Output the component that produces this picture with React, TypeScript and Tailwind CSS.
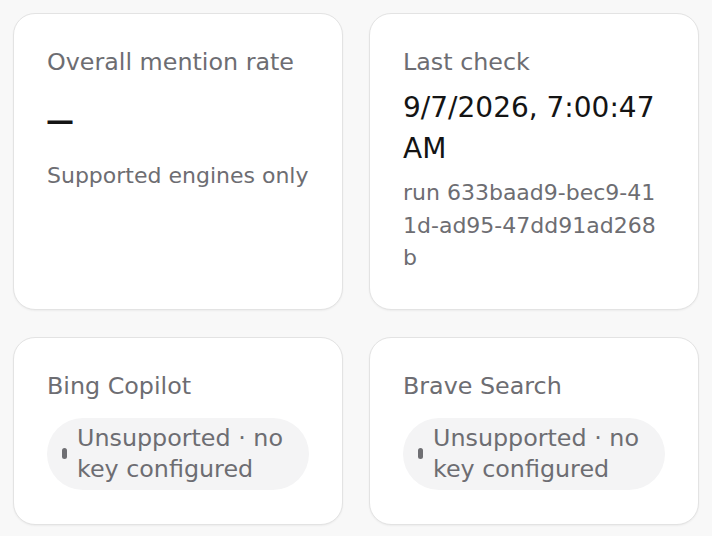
import type { ReactNode } from 'react'

const font = { fontFamily: '"DejaVu Sans", "Noto Sans", sans-serif' }

function Card({ label, children }: { label: string; children: ReactNode }) {
  return (
    <div className="flex flex-col rounded-[22px] border border-[#e3e3e3] bg-white px-[33px] pt-[32px] pb-[34px] shadow-[0_1px_2px_rgba(0,0,0,0.05)]">
      <div className="text-[23.8px] leading-[33px] text-[#6d6d72]">{label}</div>
      {children}
    </div>
  )
}

function StatusPill({ text }: { text: string }) {
  return (
    <div className="mt-[15px] flex items-center gap-[10px] rounded-full bg-[#f4f4f5] px-[15px] py-[5px]">
      <span className="h-[11px] w-[5px] shrink-0 rounded-full bg-[#6f6f73]" />
      <span className="text-[23.8px] leading-[31px] text-[#6d6d72]">{text}</span>
    </div>
  )
}

export default function App() {
  return (
    <div className="min-h-screen bg-[#f8f8f8] p-[13px]" style={font}>
      <div className="grid grid-cols-2 gap-x-[26px] gap-y-[27px]">
        <Card label="Overall mention rate">
          <div className="mt-[21px] -ml-px text-[28px] leading-[41px] font-semibold text-[#141414]">—</div>
          <div className="mt-[19px] text-[22px] leading-[32px] text-[#6d6d72]">Supported engines only</div>
        </Card>
        <Card label="Last check">
          <div className="mt-[8px] text-[28px] leading-[41px] text-[#141414]">9/7/2026, 7:00:47 AM</div>
          <div className="mt-[8px] break-all text-[22px] leading-[32.5px] text-[#6d6d72]">
            run 633baad9-bec9-411d-ad95-47dd91ad268b
          </div>
        </Card>
        <Card label="Bing Copilot">
          <StatusPill text="Unsupported · no key configured" />
        </Card>
        <Card label="Brave Search">
          <StatusPill text="Unsupported · no key configured" />
        </Card>
      </div>
    </div>
  )
}
